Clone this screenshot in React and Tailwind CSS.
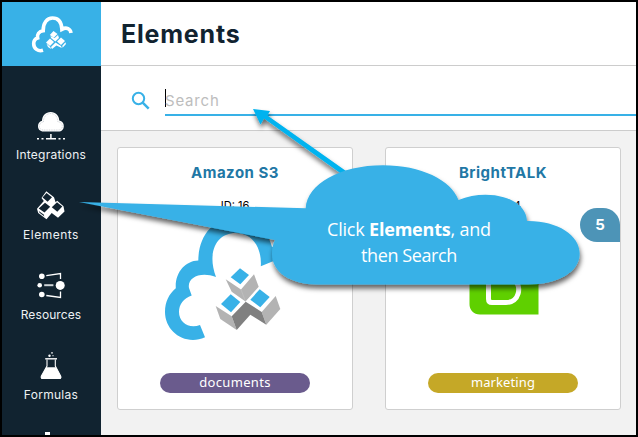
import React from 'react';

function LogoIcon() {
  return (
    <svg width="44" height="40" viewBox="30 14 44 40" fill="none" className="ml-px">
      <path d="M43 50.3C38 51.8 33.700 48.500 33.700 43.800C33.700 41 35.500 38.600 37.600 38C36.800 34.500 39 31.200 43.200 30.700C43 23 47 18 52.500 18C58 18 61.500 22 61.900 29.300C66.500 26.800 70.400 28.800 71 33" stroke="#fff" strokeWidth="3.600" />
      <g fill="#fff">
        <path d="M53.500 31L57.500 34L53.800 37.800L49.800 35z" />
        <path d="M50 38.500L54 42L50 46L46 42.500z" />
        <path d="M61 37.500L65 41L61 45L57 41.500z" />
        <path d="M46.500 43.500L50.300 47L51 49L48 47z" />
        <path d="M51 47L55.500 42.500L61 46L61.800 48L56.500 45.500L52 49z" />
        <path d="M54.600 38L58 35L59 38L55.300 41.400L51 38L50.500 36z" />
        <path d="M62.300 45.800L65.400 42.200L66 44L62.600 47.800z" />
      </g>
    </svg>
  );
}

function IntegrationsIcon() {
  return (
    <svg width="32" height="32" viewBox="35 110 32 32">
      <path d="M43.5 131.5C40 131.5 38 129 38 126.2C38 123.4 39.5 121.4 42 120.8C42.2 115.5 45.5 112 50.7 112C55.8 112 59 115.5 59.3 120.6C62.3 121 63.8 123.4 63.8 126.2C63.8 129.3 61.7 131.5 58.4 131.5z" fill="#fff" />
      <path d="M43 130C40.8 130 39.4 128.3 39.4 126.2C39.4 124 41 122.3 43.4 122C43.3 117 46.5 113.5 50.7 113.5C55 113.5 57.8 117 57.9 121.9C60.7 122 62.3 123.8 62.3 126.2C62.3 128.4 60.8 130 58.4 130z" fill="none" stroke="#a6adb2" strokeWidth=".5" strokeDasharray="1 .7" />
      <path d="M50.9 134V138M46 138.7H56" stroke="#fff" strokeWidth="1.5" />
      <path d="M37 138.7H39M41.5 138.7H43.5M58.5 138.7H60.5M63 138.7H65" stroke="#fff" strokeWidth="1.5" />
    </svg>
  );
}

function ElementsIcon() {
  return (
    <svg width="32" height="32" viewBox="35 190 32 32">
      <path d="M46.3 191.3L54 197.3L55.6 202.3L57.2 200.8L63.5 206.3L64.5 211.5L58 217.8L51.7 213L46.5 219.3L38.2 213L37 208.7L43.8 201L41.5 198z" fill="#fff" />
      <g fill="#112330">
        <path d="M46.5 192.9L52 197.2L47.6 201.7L42.6 197.6z" />
        <path d="M45 202.7L50.2 206.8L44.5 212.6L38.7 208.4z" />
        <path d="M57 202.2L62.3 206.6L57.3 211.7L51.8 207.2z" />
        <path d="M38.8 211L43.600 214.600L44.400 216.500L39.600 212.800z" />
      </g>
    </svg>
  );
}

function ResourcesIcon() {
  return (
    <svg width="32" height="32" viewBox="35 270 32 32">
      <g fill="#fff">
        <circle cx="41.8" cy="276.3" r="2.8" />
        <circle cx="39.7" cy="285.2" r="2.3" />
        <circle cx="41.8" cy="294.5" r="2.8" />
        <circle cx="60.2" cy="285.4" r="4.5" />
      </g>
      <path d="M46.3 275.6L60.5 273.5V279M46.3 295.5L60.5 297.5V291.5" stroke="#fff" strokeWidth="1.3" fill="none" />
      <path d="M44.2 285.2H53.4" stroke="#cdd2d6" strokeWidth="2" />
    </svg>
  );
}

function FormulasIcon() {
  return (
    <svg width="32" height="32" viewBox="35 350 32 32">
      <path d="M47 359.5V366L41.4 376C40.8 377.5 41.3 378.5 42.8 378.5H59.3C60.8 378.5 61.2 377.5 60.6 376L55.3 366V359.5" fill="none" stroke="#fff" strokeWidth="1.1" />
      <path d="M46.2 367.2H56L61 376.4C61.6 378 60.8 379 59.3 379H42.8C41.2 379 40.5 378 41.2 376.4z" fill="#fff" />
      <path d="M45.2 358.8H57" stroke="#fff" strokeWidth="1.4" />
      <circle cx="49.5" cy="355.8" r="1.2" fill="#fff" />
      <circle cx="52" cy="352.9" r=".8" fill="#fff" />
      <circle cx="53" cy="355.7" r=".6" fill="#fff" />
    </svg>
  );
}

function CloudCubesLogo() {
  return (
    <svg width="140" height="130" viewBox="165 215 140 130">
      <path d="M205 337.3C185 346 165 331.5 165 312C165 302 169 294 175.8 288.3C174.8 273 185 260.8 198.3 260.5C198.5 236 213 218 235.5 218C255 218 268 230 272 247C283 245 298 252 303 270L291 278.500C288 268 282 262 273 261.300L260.800 266.300C262 247 252 233 235.500 233C217 233 206.500 252 216 277C200 271 187 278 189 288L191.700 295.600C183.500 298.500 179 304.500 179 312C179 322.500 189 329 200 325z" fill="#38b1e7" />
      <g fill="#38b1e7">
        <path d="M240 268.3L249 275L240.300 284.300L230.700 277.300z" />
        <path d="M230.700 294.300L240.300 302L231 312.300L221 304z" />
        <path d="M259.700 289.300L269.700 297L260.300 307.300L250.300 299.700z" />
      </g>
      <g fill="#b3b3b3">
        <path d="M225.700 279.300L241 289.500L254 274.300L258.700 286.700L245.500 301.500L231.700 291.700z" />
        <path d="M215.700 306L231.700 316.300L236.700 330L220.300 319z" />
        <path d="M261.700 312L275.700 296L280.300 309L266.300 324.700z" />
      </g>
      <path d="M241 289.500L245.500 301.500" stroke="#c7c7c7" strokeWidth=".5" />
      <path d="M231.700 316.300L245.700 301.700L261.700 312L266.300 324.700L250.300 314.700L236.700 330z" fill="#808080" />
    </svg>
  );
}

function BrightTalkLogo() {
  return (
    <svg width="70" height="70" viewBox="469 245 70 70">
      <path d="M469.500 245H538.500V314.500H480C473.500 314.500 469.500 310 469.500 304z" fill="#5fd000" />
      <path d="M488.500 256H505C519 256 521 270 513 278C523 287 519 302.500 506 302.500H492C489.500 302.500 488.500 301.500 488.500 299z" fill="none" stroke="#fff" strokeWidth="5" />
    </svg>
  );
}

function NavItem({ label, children, spacing }) {
  return (
    <div className="-ml-px flex h-20 shrink-0 flex-col items-center">
      {children}
      <div className={`mt-1 text-[12px] leading-[18px] text-[#eef1f3] ${spacing}`}>{label}</div>
    </div>
  );
}

function Card({ title, id, logo, tag, tagClass }) {
  return (
    <div className="relative flex h-[263px] w-[236px] shrink-0 flex-col items-center rounded-[3px] border border-[#cfcfcf] bg-white">
      <div className="mt-[14px] text-[15px] leading-[22px] font-bold tracking-[0.5px] text-[#2177a5]">{title}</div>
      <div className="mt-[13px] text-[11px] leading-4 text-black">{id}</div>
      {logo}
      <div className={`absolute top-[225px] left-[42px] h-5 w-[150px] rounded-full text-center font-['Noto_Sans',sans-serif] text-[13px] leading-[19px] text-white ${tagClass}`}>{tag}</div>
    </div>
  );
}

function Callout() {
  return (
    <div className="pointer-events-none absolute -top-0.5 -left-0.5 h-[437px] w-[638px]">
      <svg width="638" height="437" viewBox="0 0 638 437" className="absolute inset-0">
        <defs>
          <filter id="shadow" x="-10%" y="-20%" width="120%" height="150%">
            <feDropShadow dx="1" dy="4" stdDeviation="2.500" floodColor="#000" floodOpacity=".6" />
          </filter>
        </defs>
        <g filter="url(#shadow)">
          <path d="M253 109L270 111L267.500 115.500L346 171L343 175L264 118.500L260.500 124.500z" fill="#00b3ef" />
        </g>
        <path filter="url(#shadow)" d="M79 202L305.700 208.300C307 184 340 165.300 383 165.300C421 165.300 451 180 458.500 200C487 188 526 197 527 221C557 220.500 579.700 235 579.700 253.500C579.700 272 558 284.500 528 284.500H318C290 284.500 272 272 272 254C272 248 273 244 275 240z" fill="#38b1e7" />
      </svg>
      <div className="absolute top-[216px] left-[309px] w-[200px] text-center font-['Open_Sans',sans-serif] text-[18px] leading-[26px] tracking-[-0.4px] whitespace-nowrap text-white">
        <div className="tracking-[-0.2px]">Click <b>Elements</b>, and</div>
        <div>then Search</div>
      </div>
    </div>
  );
}

export default function App() {
  return (
    <div className="relative flex h-[437px] w-[638px] overflow-hidden border-2 border-black bg-[#f2f2f2] font-['Inter',sans-serif]">
      <aside className="flex w-[99px] shrink-0 flex-col overflow-hidden bg-[#112330]">
        <div className="flex h-16 shrink-0 items-center justify-center bg-[#38b1e7]"><LogoIcon /></div>
        <nav className="flex flex-col pt-11">
          <NavItem label="Integrations" spacing="tracking-[0.25px]"><IntegrationsIcon /></NavItem>
          <NavItem label="Elements" spacing="tracking-[0.5px]"><ElementsIcon /></NavItem>
          <NavItem label="Resources" spacing="tracking-[0.1px]"><ResourcesIcon /></NavItem>
          <NavItem label="Formulas" spacing="tracking-[0.3px]"><FormulasIcon /></NavItem>
          <div className="mt-0.5 ml-[43px] h-4 w-[5px] shrink-0 bg-white" />
        </nav>
      </aside>
      <main className="min-w-0 flex-1">
        <header className="flex h-16 items-center border-b border-[#cccccc] bg-white pl-5">
          <h1 className="text-[25px] leading-8 font-bold tracking-[0.8px] text-[#112330]">Elements</h1>
        </header>
        <div className="flex h-[65px] border-b border-[#cccccc] bg-white pl-[30px]">
          <svg width="20" height="20" viewBox="0 0 20 20" className="mt-[25px]" fill="none" stroke="#38b1e7">
            <circle cx="7.500" cy="7.500" r="5.700" strokeWidth="2" />
            <path d="M11.700 11.700L17.700 17.700" strokeWidth="2.500" />
          </svg>
          <div className="mt-[22px] ml-[14px] h-[28px] flex-1 border-b-2 border-[#38b1e7]">
            <div className="mt-px flex h-[18px] items-center border-l border-black">
              <span className="mt-[5px] -ml-px text-[15px] leading-5 tracking-[0.8px] text-[#bdbdbd]">Search</span>
            </div>
          </div>
        </div>
        <div className="flex gap-8 pt-4 pl-4">
          <Card title="Amazon S3" id="ID: 16" tag={<span className="tracking-[0.35px]">documents</span>} tagClass="bg-[#6a5b8d]" logo={<div className="mt-0.5"><CloudCubesLogo /></div>} />
          <div className="relative">
            <Card title="BrightTALK" id="ID: 184" tag={<span className="tracking-[0.1px]">marketing</span>} tagClass="bg-[#c5a827]" logo={<div className="mt-8 ml-[2px]"><BrightTalkLogo /></div>} />
            <div className="absolute top-[61px] right-px flex h-[34px] w-10 items-center justify-center rounded-l-[17px] rounded-tr-[17px] bg-[#4d94b7] text-[15px] font-bold text-white">5</div>
          </div>
        </div>
      </main>
      <Callout />
    </div>
  );
}
